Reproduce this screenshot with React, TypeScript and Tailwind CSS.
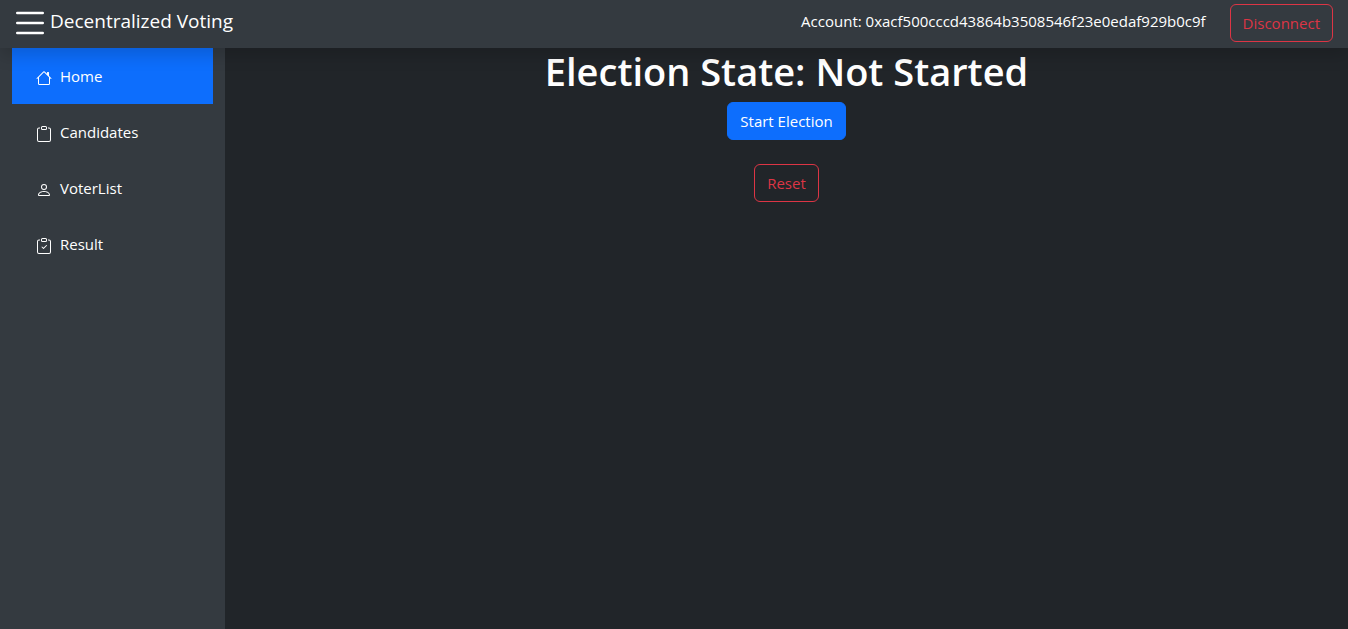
import type { ReactNode } from "react";
import { BsClipboard, BsClipboardCheck, BsHouse, BsPerson } from "react-icons/bs";

type NavItem = { label: string; icon: ReactNode; active?: boolean };

const navItems: NavItem[] = [
  { label: "Home", icon: <BsHouse size={16} />, active: true },
  { label: "Candidates", icon: <BsClipboard size={16} /> },
  { label: "VoterList", icon: <BsPerson size={16} /> },
  { label: "Result", icon: <BsClipboardCheck size={16} /> },
];

function Header() {
  return (
    <header className="relative z-10 flex min-h-12 items-start justify-between bg-[#343a40] pt-1 pr-[15px] pl-2.5 shadow-[0_8px_16px_rgba(0,0,0,0.15)]">
      <div className="flex items-center">
        <button type="button" aria-label="Toggle menu" className="cursor-pointer">
          <svg
            width="40"
            height="40"
            viewBox="0 0 16 16"
            fill="none"
            stroke="currentColor"
            strokeLinecap="round"
            aria-hidden="true"
          >
            <path d="M2.9 3.6h10.2M2.9 7.6h10.2M2.9 11.6h10.2" />
          </svg>
        </button>
        <span className="pb-1.5 text-[19px] leading-7">Decentralized Voting</span>
      </div>
      <div className="flex items-center gap-6">
        <span className="pb-1 text-[15px] leading-6">
          Account: 0xacf500cccd43864b3508546f23e0edaf929b0c9f
        </span>
        <OutlineButton>Disconnect</OutlineButton>
      </div>
    </header>
  );
}

function OutlineButton({ children }: { children: ReactNode }) {
  return (
    <button
      type="button"
      className="cursor-pointer rounded-md border border-[#dc3545] px-3 py-1.5 text-[15px] leading-6 text-[#dc3545]"
    >
      {children}
    </button>
  );
}

function Sidebar() {
  return (
    <nav className="w-[225px] shrink-0 bg-[#343a40] px-3">
      <ul>
        {navItems.map((item) => (
          <li key={item.label}>
            <a
              href="#"
              aria-current={item.active ? "page" : undefined}
              className={
                item.active
                  ? "flex h-14 items-center gap-2 bg-[#0d6efd] px-6"
                  : "flex h-14 items-center gap-2 px-6"
              }
            >
              <span className="pt-1">{item.icon}</span>
              <span className="text-[15px] leading-6">{item.label}</span>
            </a>
          </li>
        ))}
      </ul>
    </nav>
  );
}

export default function App() {
  return (
    <div className="flex min-h-screen flex-col bg-[#212529] font-['Open_Sans','Noto_Sans',sans-serif] text-white">
      <Header />
      <div className="flex flex-1">
        <Sidebar />
        <main className="flex flex-1 flex-col items-center">
          <h1 className="mb-2 text-[38px] leading-[46px] font-semibold">
            Election State: Not Started
          </h1>
          <button
            type="button"
            className="mb-6 cursor-pointer rounded-md border border-[#0d6efd] bg-[#0d6efd] px-3 py-1.5 text-[15px] leading-6"
          >
            Start Election
          </button>
          <OutlineButton>Reset</OutlineButton>
        </main>
      </div>
    </div>
  );
}
